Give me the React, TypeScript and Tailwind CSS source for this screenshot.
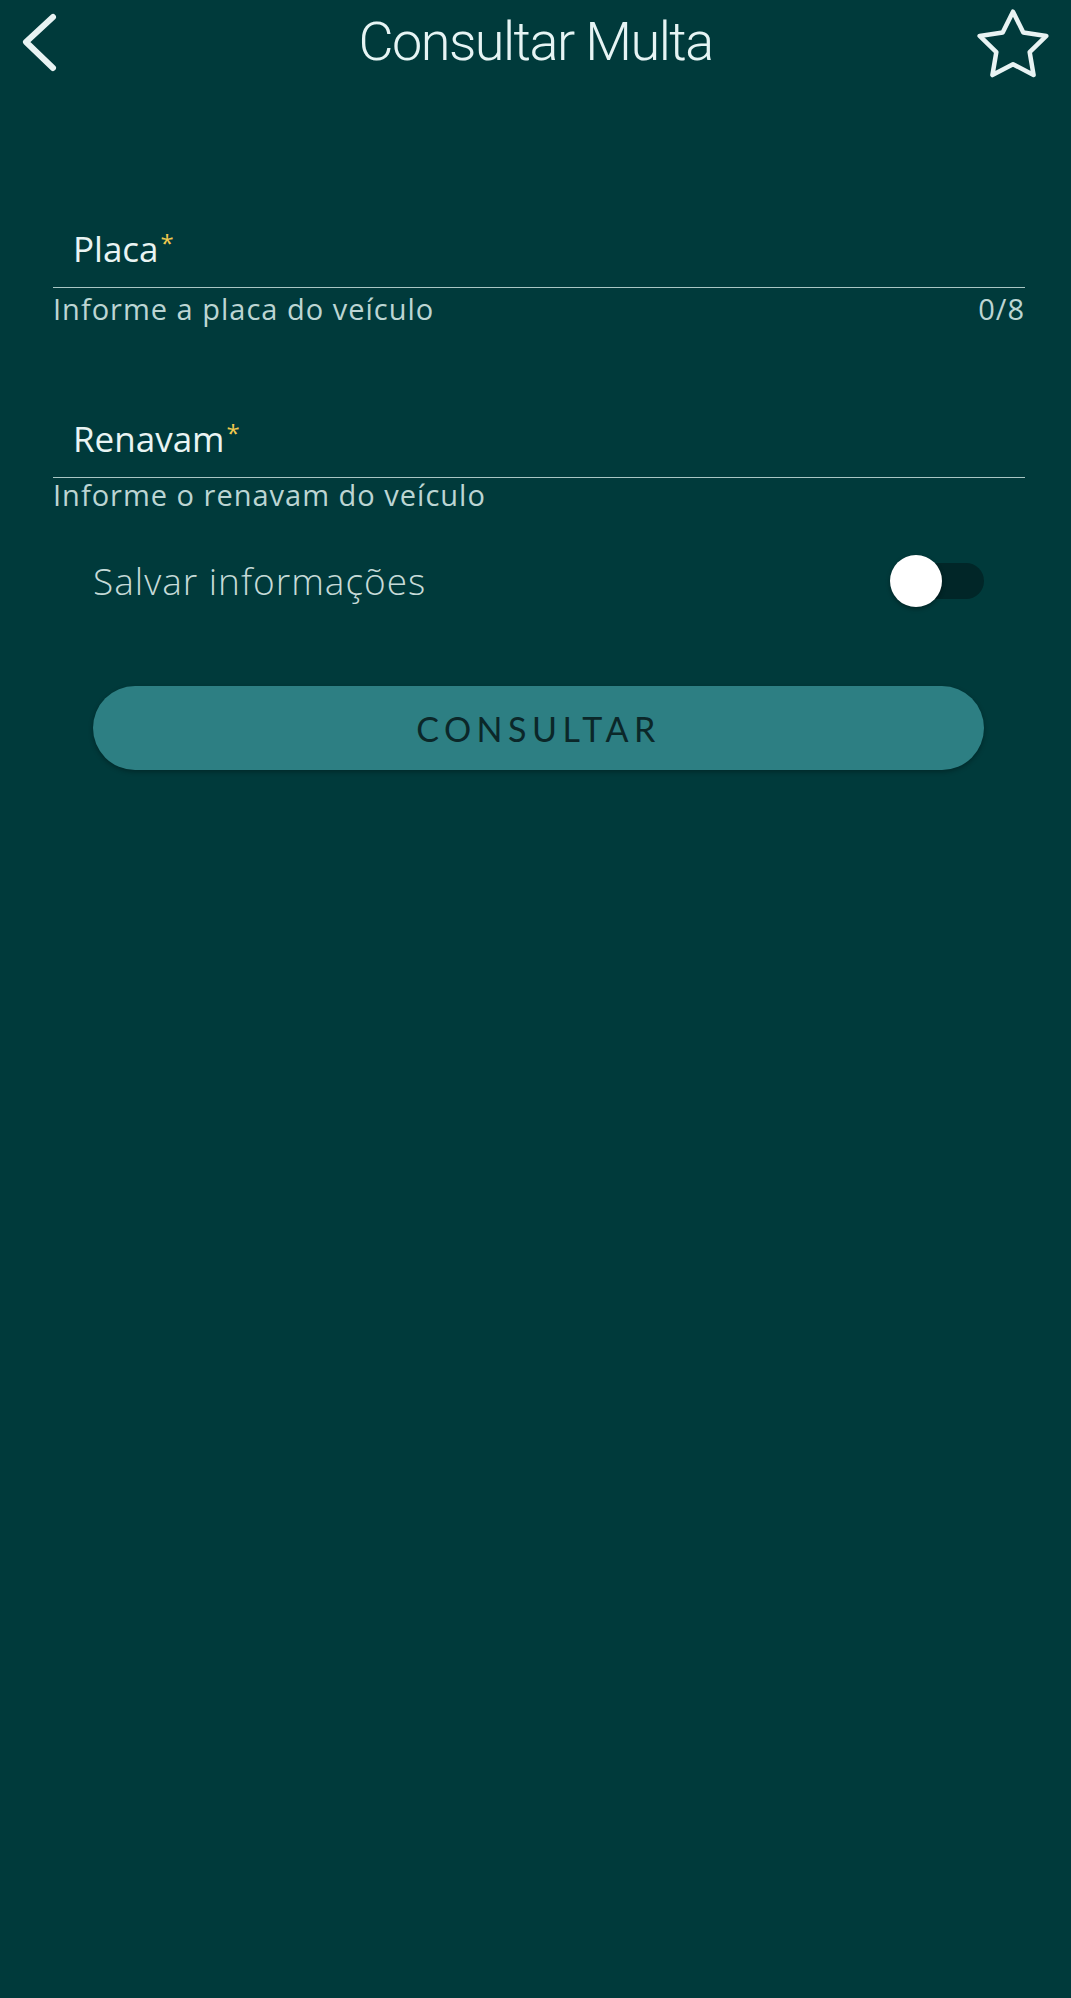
import { useState } from 'react';

interface FieldProps {
  label: string;
  hint: string;
  counter?: string;
  hintGap: string;
  topGap: string;
}

function Field({ label, hint, counter, hintGap, topGap }: FieldProps) {
  return (
    <div className={topGap}>
      <div className="pl-[20px] pb-[17px] border-b border-[#a9c6c4] text-[35px] leading-[42px] font-medium text-[#e9f4f3]">
        {label}
        <span className="ml-[2px] text-[24px] leading-none align-[10px] text-[#f0c94e]">*</span>
      </div>
      <div className={`flex justify-between text-[29px] leading-[34px] tracking-[1px] text-[#bcd5d3] ${hintGap}`}>
        <span>{hint}</span>
        {counter && <span>{counter}</span>}
      </div>
    </div>
  );
}

export default function App() {
  const [save, setSave] = useState(false);

  return (
    <div className="min-h-screen w-full bg-[#003a3b] font-['Open_Sans','Lato',sans-serif]">
      {/* Top bar */}
      <header className="grid grid-cols-[1fr_auto_1fr] items-start h-[84px]">
        <button type="button" aria-label="Voltar" className="justify-self-start ml-[20px] mt-[10px]">
          <svg width="40" height="64" viewBox="0 0 40 64" fill="none" stroke="#e8f3f3" strokeWidth="6" strokeLinecap="round" strokeLinejoin="round">
            <polyline points="33,7 6,32 33,58" />
          </svg>
        </button>
        <h1 className="pt-[10px] text-[54px] leading-[63px] font-light tracking-[-1.5px] text-[#e6f4f4] font-['Roboto',sans-serif]">
          Consultar Multa
        </h1>
        <button type="button" aria-label="Favoritar" className="justify-self-end mr-[18px] mt-[5px]">
          <svg width="80" height="80" viewBox="0 0 24 24" fill="none" stroke="#e8f3f3" strokeWidth="1.35" strokeLinejoin="round">
            <polygon points="12,2 15.09,8.26 22,9.27 17,14.14 18.18,21.02 12,17.77 5.82,21.02 7,14.14 2,9.27 8.91,8.26" />
          </svg>
        </button>
      </header>

      <main className="pl-[53px] pr-[46px] pt-[144px]">
        <Field label="Placa" hint="Informe a placa do veículo" counter="0/8" hintGap="mt-[4px]" topGap="" />
        <Field label="Renavam" hint="Informe o renavam do veículo" hintGap="mt-0" topGap="mt-[92px]" />

        <div className="pl-[40px] pr-[41px]">
          <div className="mt-[47px] flex items-center justify-between">
            <span className="text-[37px] leading-[44px] font-light tracking-[1px] text-[#c6dad8]">Salvar informações</span>
            <button
              type="button"
              onClick={() => setSave(!save)}
              aria-label="Salvar informações"
              className="relative w-[88px] h-[36px] rounded-full bg-[#012628]"
            >
              <span
                className={`absolute top-[-8px] w-[52px] h-[52px] rounded-full bg-white shadow-[0_2px_4px_rgba(0,0,0,0.35)] ${
                  save ? 'left-[42px]' : 'left-[-6px]'
                }`}
              />
            </button>
          </div>

          <button
            type="button"
            className="mt-[83px] w-full h-[84px] rounded-full bg-[#2d7f83] shadow-[0_2px_5px_rgba(0,0,0,0.3)] font-['Lato',sans-serif] text-[34px] tracking-[5.5px] text-[#0b2729]"
          >
            CONSULTAR
          </button>
        </div>
      </main>
    </div>
  );
}
